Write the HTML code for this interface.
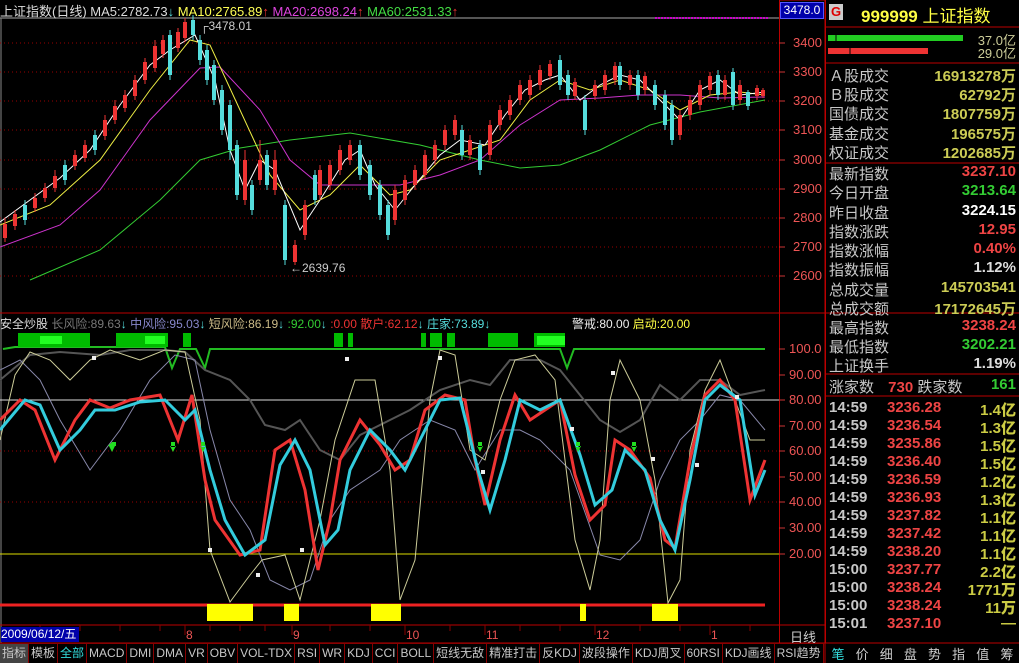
<!DOCTYPE html><html><head><meta charset="utf-8"><style>
body{margin:0;background:#000;width:1019px;height:663px;overflow:hidden;font-family:"Liberation Sans","Noto Sans CJK SC",sans-serif;position:relative}
.a{position:absolute;white-space:nowrap}
.rp{position:absolute;left:826px;width:193px;font-size:15px;color:#c8c8c8}
.row{position:absolute;left:3px;right:3px;height:19px}
.row span{position:absolute;right:0;font-weight:bold}
.t{position:absolute;left:3px;right:3px;height:18px;font-size:15px;font-weight:bold}
.t b{position:absolute}
.tabs{position:absolute;top:643px;left:0;height:20px;width:825px;display:flex;font-size:12px;color:#c8c8c8}
.tabs div{border-right:1px solid #800;padding:0 2px;line-height:19px;background:#000;border-top:1px solid #800}
</style></head><body>
<svg width="1019" height="663" style="position:absolute;left:0;top:0">
<!-- frames -->
<line x1="0" y1="18" x2="779" y2="18" stroke="#aaa"/>
<line x1="1" y1="18" x2="1" y2="643" stroke="#888"/>
<rect x="779.5" y="0" width="46" height="643" fill="none" stroke="#b00"/>
<line x1="779" y1="313" x2="1019" y2="313" stroke="#b00"/>
<line x1="0" y1="313" x2="779" y2="313" stroke="#b00"/>
<line x1="0" y1="625" x2="825" y2="625" stroke="#b00"/>
<line x1="0" y1="643" x2="1019" y2="643" stroke="#b00"/>
<line x1="825" y1="27" x2="1019" y2="27" stroke="#b00"/>
<line x1="825" y1="63" x2="1019" y2="63" stroke="#b00"/>
<line x1="825" y1="163" x2="1019" y2="163" stroke="#b00"/>
<line x1="825" y1="374" x2="1019" y2="374" stroke="#b00"/>
<line x1="825" y1="396" x2="1019" y2="396" stroke="#b00"/>
<line x1="825" y1="0" x2="825" y2="663" stroke="#b00"/>
<!-- price grid -->
<g stroke="#900" stroke-dasharray="1,3">
<line x1="0" y1="43" x2="779" y2="43"/><line x1="0" y1="72" x2="779" y2="72"/><line x1="0" y1="101" x2="779" y2="101"/><line x1="0" y1="130" x2="779" y2="130"/><line x1="0" y1="160" x2="779" y2="160"/><line x1="0" y1="189" x2="779" y2="189"/><line x1="0" y1="218" x2="779" y2="218"/><line x1="0" y1="247" x2="779" y2="247"/><line x1="0" y1="276" x2="779" y2="276"/>
<line x1="0" y1="451" x2="779" y2="451"/><line x1="0" y1="502" x2="779" y2="502"/>
</g>
<line x1="655" y1="18" x2="768" y2="18" stroke="#c0c" stroke-dasharray="2,1" stroke-width="2"/>
<!-- MAs -->
<polyline fill="none" stroke="#3c3" points="30,280 100,250 160,200 200,160 240,148 290,140 350,133 420,145 480,160 520,168 560,165 600,150 650,125 700,112 765,100"/>
<polyline fill="none" stroke="#c3c" points="0,247 60,225 100,190 150,120 200,68 220,67 260,110 290,160 320,185 360,185 400,185 440,175 480,160 520,125 560,100 600,98 640,95 680,95 720,98 765,97"/>
<polyline fill="none" stroke="#ee4" points="0,225 50,205 100,160 150,90 190,40 210,45 240,110 270,175 300,210 330,195 360,165 390,195 410,190 440,160 470,150 500,140 530,100 560,80 590,90 620,80 650,90 680,110 710,95 740,92 765,95"/>
<polyline fill="none" stroke="#fff" points="0,222 30,200 60,178 90,150 120,105 150,65 170,50 195,35 215,80 230,150 245,190 260,160 275,170 300,230 320,200 345,160 360,150 375,185 395,210 415,185 440,155 460,140 485,145 505,115 525,90 545,80 560,75 580,100 600,85 620,75 640,80 660,100 680,120 700,90 720,80 740,95 765,92"/>
<!-- candles -->
<g stroke-width="1" id="w">
<path stroke="#e33" d="M5 218V242M15 210V230M35 193V212M45 183V202M55 170V192M75 150V170M85 140V162M105 115V140M115 100V124M125 90V112M135 75V100M145 58V84M155 40V72M163 35V58M178 28V52M185 18V42M245 150V205M260 140V185M275 150V195M295 240V265M305 200V240M320 165V200M330 160V190M340 145V175M350 140V165M395 185V225M405 175V205M415 165V190M425 150V180M435 140V165M445 125V150M455 115V140M470 135V160M490 120V160M500 105V130M510 95V120M520 80V105M530 75V100M540 65V90M550 60V80M575 78V100M595 80V100M605 70V95M615 62V85M630 70V90M645 72V95M680 110V140M690 95V120M700 80V110M710 72V95M725 75V100M740 80V105M757 85V100M763 88V98"/>
<path stroke="#5dd" d="M25 200V225M65 160V185M95 130V155M170 30V80M193 15V40M200 35V65M207 45V85M214 60V105M222 85V135M230 100V160M237 140V200M252 180V215M267 150V190M285 200V265M315 170V205M360 140V180M370 160V200M380 180V220M388 200V240M462 125V160M480 140V175M560 55V90M568 70V100M585 95V135M620 62V90M638 70V100M655 80V110M665 90V130M672 100V145M718 70V100M733 68V110M748 90V110"/>
</g>
<g stroke-width="4">
<path stroke="#e33" d="M5 224V238M15 214V226M35 198V208M45 188V198M55 176V188M75 155V166M85 145V158M105 120V136M115 106V120M125 95V108M135 80V96M145 62V80M155 46V68M163 40V54M178 32V48M185 22V38M245 160V200M260 160V180M275 160V190M295 245V262M305 205V235M320 170V195M330 165V185M340 150V170M350 145V160M395 190V220M405 180V200M415 170V185M425 155V175M435 145V160M445 130V145M455 120V135M470 140V155M490 125V155M500 110V125M510 100V115M520 85V100M530 80V95M540 70V85M550 64V76M575 82V96M595 85V96M605 75V90M615 66V80M630 75V85M645 76V90M680 115V135M690 100V115M700 85V105M710 76V90M725 80V95M740 85V100M757 88V96M763 90V96"/>
<path stroke="#5dd" d="M25 205V220M65 165V180M95 135V150M170 35V75M193 20V35M200 40V60M207 50V80M214 65V100M222 90V130M230 105V150M237 145V195M252 185V210M267 155V185M285 205V260M315 175V200M360 145V175M370 165V195M380 185V215M388 205V235M462 130V155M480 145V170M560 60V85M568 75V95M585 100V130M620 66V85M638 75V95M655 85V105M665 95V125M672 105V140M718 75V95M733 72V105M748 92V106"/>
</g>
<!-- indicator -->
<line x1="0" y1="400" x2="779" y2="400" stroke="#ddd"/>
<line x1="0" y1="554" x2="779" y2="554" stroke="#dd0"/>
<line x1="0" y1="605" x2="765" y2="605" stroke="#e22" stroke-width="3"/>
<polyline fill="none" stroke="#2b2" stroke-width="2" points="3,349 15,347 165,347 172,368 180,349 196,349 205,368 210,349 560,349 567,368 574,349 765,349"/>
<g fill="#0b0"><rect x="18" y="333" width="72" height="14"/><rect x="116" y="333" width="52" height="14"/><rect x="183" y="333" width="8" height="14"/><rect x="334" y="333" width="9" height="14"/><rect x="348" y="333" width="5" height="14"/><rect x="421" y="333" width="5" height="14"/><rect x="430" y="333" width="12" height="14"/><rect x="447" y="333" width="8" height="14"/><rect x="488" y="333" width="30" height="14"/><rect x="534" y="333" width="31" height="14"/></g>
<g fill="#2f2"><rect x="40" y="336" width="22" height="8"/><rect x="145" y="336" width="20" height="8"/><rect x="537" y="336" width="28" height="9"/></g>
<g fill="#ff0"><rect x="207" y="604" width="46" height="17"/><rect x="284" y="604" width="15" height="17"/><rect x="371" y="604" width="30" height="17"/><rect x="580" y="604" width="6" height="17"/><rect x="652" y="604" width="26" height="17"/></g>
<polyline fill="none" stroke="#555" stroke-width="2" points="0,380 30,355 60,352 100,355 130,350 165,350 185,352 205,370 230,380 250,400 265,425 285,430 300,420 320,450 340,460 360,435 390,420 410,410 440,390 470,380 490,385 510,360 540,360 560,370 580,395 600,420 620,432 640,420 660,385 680,400 700,380 720,380 740,395 765,390"/>
<polyline fill="none" stroke="#88a" stroke-width="1" points="0,370 20,360 40,380 60,420 90,470 120,430 150,380 175,355 195,360 210,430 230,500 250,530 270,580 290,590 310,580 330,520 350,490 380,470 400,440 430,420 455,430 475,470 500,430 520,430 540,440 570,470 600,555 620,560 640,540 660,480 680,440 700,420 720,395 740,400 765,430"/>
<polyline fill="none" stroke="#cc9" stroke-width="1" points="0,440 15,375 30,352 50,360 70,380 90,360 110,350 140,360 165,350 185,352 200,420 210,550 230,602 250,575 262,560 285,555 300,600 310,560 320,520 335,440 355,380 375,380 390,470 400,600 415,560 430,400 440,350 455,355 470,450 485,460 500,400 515,360 535,355 555,380 575,540 590,590 600,540 610,400 620,360 640,400 655,480 668,603 680,580 690,450 705,390 720,360 735,400 750,440 765,440"/>
<polyline fill="none" stroke="#e33" stroke-width="3" points="0,420 20,400 35,410 55,460 75,420 90,400 110,408 130,400 160,395 178,440 192,395 205,480 215,520 240,555 260,550 275,450 290,440 305,490 318,570 330,520 340,460 360,420 380,445 395,470 410,460 425,410 445,395 465,400 475,460 485,505 500,440 515,395 530,420 545,410 560,400 575,475 590,520 605,505 615,440 630,450 650,478 665,540 675,548 690,460 705,395 720,380 735,400 750,500 765,460"/>
<polyline fill="none" stroke="#3cd" stroke-width="3" points="0,430 25,400 40,405 60,450 80,430 95,410 115,410 140,402 165,400 185,420 195,410 210,470 225,520 245,555 265,540 280,465 295,440 310,470 325,545 338,530 350,470 370,430 390,450 405,470 420,440 440,400 460,398 478,470 490,510 505,460 520,400 540,410 560,400 580,455 595,505 612,490 625,450 645,470 660,520 675,550 690,480 705,400 720,385 740,400 755,495 765,470"/>
<g fill="#eee"><rect x="92" y="356" width="4" height="4"/><rect x="208" y="548" width="4" height="4"/><rect x="256" y="573" width="4" height="4"/><rect x="300" y="548" width="4" height="4"/><rect x="345" y="357" width="4" height="4"/><rect x="481" y="470" width="4" height="4"/><rect x="438" y="356" width="4" height="4"/><rect x="570" y="427" width="4" height="4"/><rect x="611" y="371" width="4" height="4"/><rect x="651" y="457" width="4" height="4"/><rect x="695" y="463" width="4" height="4"/><rect x="735" y="395" width="4" height="4"/></g>
<g fill="#2d2"><path d="M108 446h8v-4h-4zM109 446l3 6 3-6z"/><path d="M170 446l3 6 3-6zM171 442h4v5h-4z"/><path d="M200 446l3 6 3-6zM201 442h4v5h-4z"/><path d="M477 446l3 6 3-6zM478 442h4v5h-4z"/><path d="M575 446l3 6 3-6zM576 442h4v5h-4z"/><path d="M631 446l3 6 3-6zM632 442h4v5h-4z"/></g>
<!-- axis ticks -->
<g stroke="#c33"><path d="M779 43h6M779 72h6M779 101h6M779 130h6M779 160h6M779 189h6M779 218h6M779 247h6M779 276h6M779 349h6M779 375h6M779 400h6M779 426h6M779 451h6M779 477h6M779 502h6M779 528h6M779 554h6"/></g>
<!-- right bars -->
<rect x="828" y="35" width="135" height="6" fill="#2c2"/><rect x="828" y="48" width="100" height="6" fill="#e33"/>
<line x1="836" y1="35" x2="836" y2="41" stroke="#000"/><line x1="850" y1="48" x2="850" y2="54" stroke="#000"/>
<!-- date ticks -->
<g stroke="#800"><path d="M40 625v6M80 625v6M120 625v6M160 625v6M185 625v10M210 625v6M240 625v6M265 625v6M292 625v10M330 625v6M370 625v6M405 625v10M450 625v6M485 625v10M520 625v6M560 625v6M595 625v10M640 625v6M680 625v6M710 625v10M750 625v6"/></g>
</svg>
<div class="a" style="left:0;top:1px;font-size:13px;color:#ddd">上证指数(日线) MA5:2782.73<span style="color:#5dd">↓</span> <span style="color:#ff5">MA10:2765.89</span><span style="color:#e33">↑</span> <span style="color:#d4d">MA20:2698.24</span><span style="color:#e33">↑</span> <span style="color:#4d4">MA60:2531.33</span><span style="color:#e33">↑</span></div>
<div class="a" style="left:200px;top:19px;font-size:12px;color:#ccc">┌3478.01</div>
<div class="a" style="left:290px;top:261px;font-size:12px;color:#ccc">←2639.76</div>
<div class="a" style="left:0;top:315px;font-size:12px;color:#ddd">安全炒股 <span style="color:#777">长风险:89.63</span><span style="color:#5dd">↓</span> <span style="color:#88c">中风险:95.03</span><span style="color:#5dd">↓</span> <span style="color:#cb8">短风险:86.19</span><span style="color:#5dd">↓</span> <span style="color:#3c3">:92.00</span><span style="color:#5dd">↓</span> <span style="color:#e33">:0.00 散户:62.12</span><span style="color:#5dd">↓</span> <span style="color:#5dd">庄家:73.89↓</span></div>
<div class="a" style="left:572px;top:315px;font-size:12px;color:#eee">警戒:80.00 <span style="color:#ff4">启动:20.00</span></div>
<div class="a" style="left:780px;top:2px;width:42px;height:15px;background:#00a;border:1px solid #55f;color:#fff;font-size:12px;text-align:center;line-height:15px">3478.0</div>
<div class="a" style="left:790px;top:0;font-size:13px;color:#e44;line-height:0"></div>
<div style="position:absolute;left:783px;top:0;font-size:13px;color:#e55;line-height:1">
<div class="a" style="top:36px;left:10px">3400</div><div class="a" style="top:65px;left:10px">3300</div><div class="a" style="top:94px;left:10px">3200</div><div class="a" style="top:123px;left:10px">3100</div><div class="a" style="top:153px;left:10px">3000</div><div class="a" style="top:182px;left:10px">2900</div><div class="a" style="top:211px;left:10px">2800</div><div class="a" style="top:240px;left:10px">2700</div><div class="a" style="top:269px;left:10px">2600</div>
<div class="a" style="top:342px;left:6px">100.0</div><div class="a" style="top:368px;left:6px">90.00</div><div class="a" style="top:393px;left:6px">80.00</div><div class="a" style="top:419px;left:6px">70.00</div><div class="a" style="top:444px;left:6px">60.00</div><div class="a" style="top:470px;left:6px">50.00</div><div class="a" style="top:495px;left:6px">40.00</div><div class="a" style="top:521px;left:6px">30.00</div><div class="a" style="top:547px;left:6px">20.00</div>
</div>
<div class="a" style="left:790px;top:627px;font-size:13px;color:#ccc">日线</div>
<div class="a" style="left:1px;top:627px;width:78px;height:15px;background:#00a;color:#fff;font-size:12px;line-height:15px">2009/06/12/五</div>
<div class="a" style="top:628px;font-size:12px;color:#e55;left:186px">8</div><div class="a" style="top:628px;font-size:12px;color:#e55;left:293px">9</div><div class="a" style="top:628px;font-size:12px;color:#e55;left:406px">10</div><div class="a" style="top:628px;font-size:12px;color:#e55;left:486px">11</div><div class="a" style="top:628px;font-size:12px;color:#e55;left:596px">12</div><div class="a" style="top:628px;font-size:12px;color:#e55;left:711px">1</div>
<div class="tabs"><div style="background:#444">指标</div><div>模板</div><div style="color:#3dd">全部</div><div>MACD</div><div>DMI</div><div>DMA</div><div>VR</div><div>OBV</div><div>VOL-TDX</div><div>RSI</div><div>WR</div><div>KDJ</div><div>CCI</div><div>BOLL</div><div>短线无敌</div><div>精准打击</div><div>反KDJ</div><div>波段操作</div><div>KDJ周叉</div><div>60RSI</div><div>KDJ画线</div><div>RSI趋势</div></div>
<div class="a" style="left:826px;top:644px;width:193px;display:flex;font-size:13px;color:#ccc"><span style="flex:1;text-align:center;color:#3dd">笔</span><span style="flex:1;text-align:center">价</span><span style="flex:1;text-align:center">细</span><span style="flex:1;text-align:center">盘</span><span style="flex:1;text-align:center">势</span><span style="flex:1;text-align:center">指</span><span style="flex:1;text-align:center">值</span><span style="flex:1;text-align:center">筹</span></div>
<div class="rp" style="top:0;height:27px">
<div class="a" style="left:3px;top:4px;width:14px;height:16px;background:#ccc;color:#d00;font-weight:bold;font-size:13px;text-align:center;line-height:16px">G</div>
<div class="a" style="left:35px;top:2px;color:#ff4;font-size:17px"><b>999999</b> 上证指数</div>
</div>
<div class="rp" style="top:30px;font-size:13px;color:#cc9"><div class="a" style="right:3px;top:0">37.0亿</div><div class="a" style="right:3px;top:13px">29.0亿</div></div>
<div class="rp" style="top:65px">
<div class="row" style="top:0">Ａ股成交<span style="color:#cc5">16913278万</span></div>
<div class="row" style="top:19px">Ｂ股成交<span style="color:#cc5">62792万</span></div>
<div class="row" style="top:38px">国债成交<span style="color:#cc5">1807759万</span></div>
<div class="row" style="top:58px">基金成交<span style="color:#cc5">196575万</span></div>
<div class="row" style="top:77px">权证成交<span style="color:#cc5">1202685万</span></div>
<div class="row" style="top:98px">最新指数<span style="color:#e44">3237.10</span></div>
<div class="row" style="top:117px">今日开盘<span style="color:#3c3">3213.64</span></div>
<div class="row" style="top:137px">昨日收盘<span style="color:#fff">3224.15</span></div>
<div class="row" style="top:156px">指数涨跌<span style="color:#e44">12.95</span></div>
<div class="row" style="top:175px">指数涨幅<span style="color:#e44">0.40%</span></div>
<div class="row" style="top:194px">指数振幅<span style="color:#ddd">1.12%</span></div>
<div class="row" style="top:214px">总成交量<span style="color:#cc5">145703541</span></div>
<div class="row" style="top:233px">总成交额<span style="color:#cc5">17172645万</span></div>
<div class="row" style="top:252px">最高指数<span style="color:#e44">3238.24</span></div>
<div class="row" style="top:271px">最低指数<span style="color:#3c3">3202.21</span></div>
<div class="row" style="top:290px">上证换手<span style="color:#ddd">1.19%</span></div>
<div class="row" style="top:311px">涨家数 <b style="color:#e44;margin-left:10px">730</b> 跌家数<span style="color:#3c3">161</span></div>
</div>
<div class="rp" style="top:399px">
<div class="t" style="top:0"><b style="left:0">14:59</b><b style="left:58px;color:#e44">3236.28</b><b style="right:0;color:#cc4">1.4亿</b></div>
<div class="t" style="top:18px"><b style="left:0">14:59</b><b style="left:58px;color:#e44">3236.54</b><b style="right:0;color:#cc4">1.3亿</b></div>
<div class="t" style="top:36px"><b style="left:0">14:59</b><b style="left:58px;color:#e44">3235.86</b><b style="right:0;color:#cc4">1.5亿</b></div>
<div class="t" style="top:54px"><b style="left:0">14:59</b><b style="left:58px;color:#e44">3236.40</b><b style="right:0;color:#cc4">1.5亿</b></div>
<div class="t" style="top:72px"><b style="left:0">14:59</b><b style="left:58px;color:#e44">3236.59</b><b style="right:0;color:#cc4">1.2亿</b></div>
<div class="t" style="top:90px"><b style="left:0">14:59</b><b style="left:58px;color:#e44">3236.93</b><b style="right:0;color:#cc4">1.3亿</b></div>
<div class="t" style="top:108px"><b style="left:0">14:59</b><b style="left:58px;color:#e44">3237.82</b><b style="right:0;color:#cc4">1.1亿</b></div>
<div class="t" style="top:126px"><b style="left:0">14:59</b><b style="left:58px;color:#e44">3237.42</b><b style="right:0;color:#cc4">1.1亿</b></div>
<div class="t" style="top:144px"><b style="left:0">14:59</b><b style="left:58px;color:#e44">3238.20</b><b style="right:0;color:#cc4">1.1亿</b></div>
<div class="t" style="top:162px"><b style="left:0">15:00</b><b style="left:58px;color:#e44">3237.77</b><b style="right:0;color:#cc4">2.2亿</b></div>
<div class="t" style="top:180px"><b style="left:0">15:00</b><b style="left:58px;color:#e44">3238.24</b><b style="right:0;color:#cc4">1771万</b></div>
<div class="t" style="top:198px"><b style="left:0">15:00</b><b style="left:58px;color:#e44">3238.24</b><b style="right:0;color:#cc4">11万</b></div>
<div class="t" style="top:216px"><b style="left:0">15:01</b><b style="left:58px;color:#e44">3237.10</b><b style="right:0;color:#cc4">—</b></div>
</div>
</body></html>
